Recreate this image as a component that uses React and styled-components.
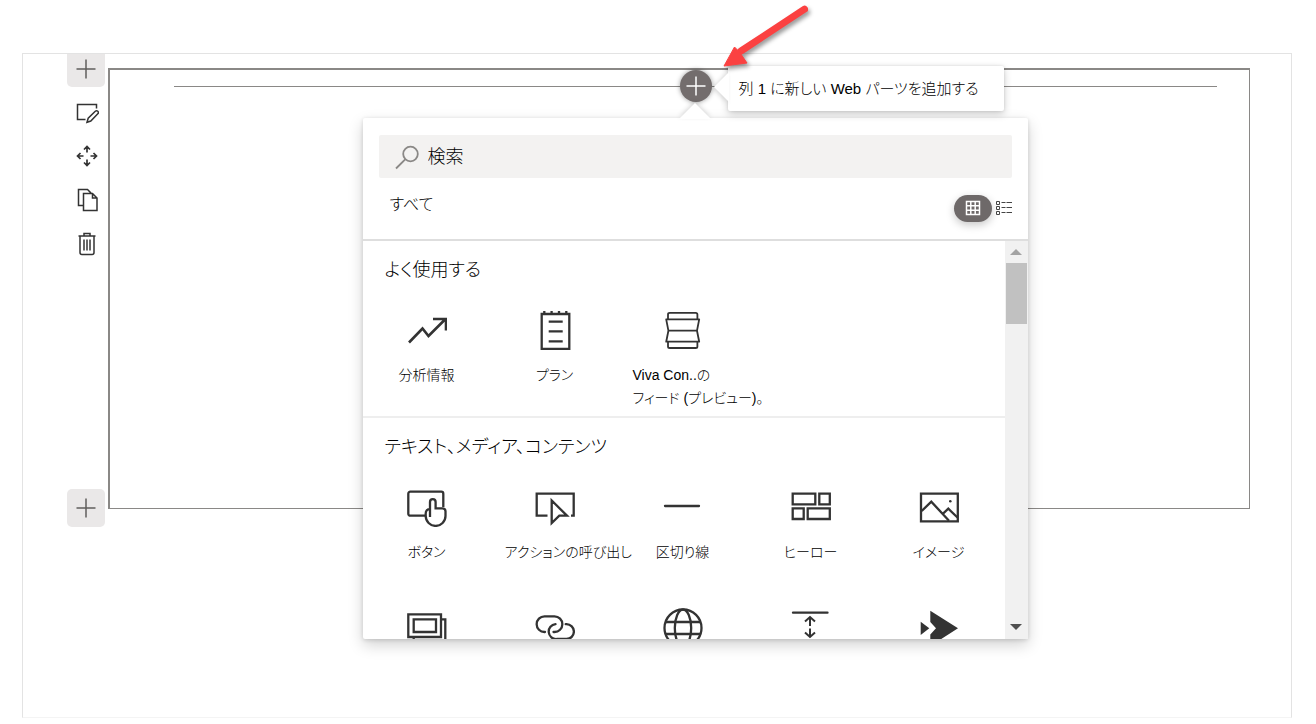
import React from 'react'
import styled, { createGlobalStyle, css } from 'styled-components'

const frequent = [
  { icon: 'trend', label: '分析情報' },
  { icon: 'plan', label: 'プラン' },
  { icon: 'feed', label: 'Viva Con..の', more: 'フィード (プレビュー)。', long: true },
]

const content = [
  { icon: 'button', label: 'ボタン' },
  { icon: 'action', label: 'アクションの呼び出し', long: true },
  { icon: 'divider', label: '区切り線' },
  { icon: 'hero', label: 'ヒーロー' },
  { icon: 'image', label: 'イメージ' },
  { icon: 'gallery', name: 'イメージ ギャラリー' },
  { icon: 'link', name: 'リンク' },
  { icon: 'globe', name: '埋め込み' },
  { icon: 'spacer', name: 'スペーサー' },
  { icon: 'stream', name: 'ストリーム' },
]

const shapes = {
  trend: <path d='M2 32.5L15.5 18.5L21.5 26L38 9.5M26 9H39V20.5' strokeWidth='2.6' />,
  plan: (
    <>
      <path d='M6.7 4H34.3V39H6.7Z' />
      <path d='M9.3 1V4M16.6 1V4M24 1V4M31.3 1V4M13.7 11.7H27.7M13.7 21.3H27.7M13.7 31.3H27.7' />
    </>
  ),
  feed: (
    <path
      strokeWidth='1.8'
      strokeLinejoin='round'
      d='M5 9V4.5Q5 2.8 6.7 2.8H32.7Q34.4 2.8 34.4 4.5V9M3.2 9.3H36.2L34 20.7L36.2 31.7H3.2L5.4 20.7ZM5.4 20.7H34M5 32V36.4Q5 38 6.7 38H32.7Q34.4 38 34.4 36.4V32'
    />
  ),
  button: (
    <>
      <path d='M18 28.7H3.3a2 2 0 0 1-2-2V6.7a2 2 0 0 1 2-2H34.3a2 2 0 0 1 2 2V20' />
      <path d='M23 30V15a2.8 2.8 0 0 1 5.6 0V21.3H35.5a3 3 0 0 1 3 3V29a9.8 9.8 0 0 1-19.8 0V26.5c0-2.5 1.6-4.5 4.3-4.5' />
    </>
  ),
  action: <path d='M12.5 28.7H1.7V6.7H38.7V28.7H36M16.7 13.5V36L24.3 28.7H32Z' />,
  divider: <path d='M2 19H36' strokeLinecap='round' />,
  hero: <path d='M1.7 6.7H24.3V17.3H1.7ZM28.3 6.7H38.8V17.3H28.3ZM1.7 21.3H12.7V32H1.7ZM16.7 21.3H38.8V32H16.7Z' />,
  image: (
    <>
      <path d='M2 6.7H38.8V34.3H2Z' />
      <path d='M2.7 24L12.3 14.7L30 33.7M24.3 26.3L29.3 21.7L38.5 30.5' />
      <circle cx='31.3' cy='14.3' r='1.3' fill='#333' stroke='none' />
    </>
  ),
  gallery: <path d='M1.3 6.3H34V29H1.3ZM6.7 11.3H29V24H6.7ZM34 11.3H38.3V34H6.7V29' />,
  link: (
    <path
      strokeLinecap='round'
      d='M10 24H9.5a7.8 7.8 0 0 1 0-15.7H19.5a7.8 7.8 0 0 1 0 15.7H18.5M20.5 16.2a7.4 7.4 0 0 0 1.3 14.8H31.5a7.4 7.4 0 0 0 0-14.8H30.7'
    />
  ),
  globe: (
    <>
      <circle cx='20' cy='20' r='18.5' />
      <ellipse cx='20' cy='20' rx='8.2' ry='18.5' />
      <path d='M3 14H37M3 26H37' />
    </>
  ),
  spacer: (
    <>
      <path d='M2 4.7H36.5' strokeLinecap='round' />
      <path d='M19 18V9.5M14 13.5L19 9L24 13.5M19 20.5V28.5M14 24.5L19 29L24 24.5M2 35.5H36.5' strokeWidth='2' />
    </>
  ),
  stream: (
    <path
      fill='#333'
      stroke='none'
      d='M11.3 2.7L39 20.3L11.3 38V26.5L17 20.3L11.3 14ZM1.7 13.7L10.3 20.3L1.7 27Z'
    />
  ),
}

function Tile({ icon, label, more, name, long }) {
  return (
    <TileButton type='button' aria-label={name} $long={long}>
      <TileIcon viewBox='0 0 40 40' aria-hidden='true'>{shapes[icon]}</TileIcon>
      {label && (
        <span>
          {label}
          {more && <><br />{more}</>}
        </span>
      )}
    </TileButton>
  )
}

function Plus() {
  return (
    <LineIcon viewBox='0 0 24 24' aria-hidden='true'>
      <path d='M2.5 12H21.5M12 2.5V21.5' />
    </LineIcon>
  )
}

function SectionTools() {
  return (
    <Tools>
      <AddSection type='button' aria-label='セクションの追加' $top><Plus /></AddSection>
      <Tool type='button' aria-label='編集'>
        <LineIcon viewBox='0 0 24 24'>
          <path d='M10.5 19.5H2.5V4.5H21.5V8.5' />
          <path d='M12 22.3L13.2 18.2L20.3 11.3a1.7 1.7 0 0 1 2.5 2.5L15.8 21Z' />
        </LineIcon>
      </Tool>
      <Tool type='button' aria-label='移動'>
        <LineIcon viewBox='0 0 24 24'>
          <path d='M12 8.5V3M9 5.5L12 2.5L15 5.5M12 15.5V21M9 18.5L12 21.5L15 18.5M8.5 12H3M5.5 9L2.5 12L5.5 15M15.5 12H21M18.5 9L21.5 12L18.5 15' strokeWidth='1.7' />
        </LineIcon>
      </Tool>
      <Tool type='button' aria-label='複製'>
        <LineIcon viewBox='0 0 24 24'>
          <path d='M8 17.5H3.5V1.5H12.5L16 5M8.5 5.5H17.5L22 10V22.5H8.5ZM17.5 5.5V10H22' />
        </LineIcon>
      </Tool>
      <Tool type='button' aria-label='削除'>
        <LineIcon viewBox='0 0 24 24'>
          <path d='M3.5 4H20.5M9 4V1.5H15V4M5 4V20.5a2 2 0 0 0 2 2H17a2 2 0 0 0 2-2V4M9 7.5V18.5M12 7.5V18.5M15 7.5V18.5' />
        </LineIcon>
      </Tool>
      <AddSection type='button' aria-label='セクションの追加'><Plus /></AddSection>
    </Tools>
  )
}

function Picker() {
  return (
    <Callout>
      <Header>
        <Search>
          <svg width='26' height='26' viewBox='0 0 26 26' fill='none' stroke='#8a8886' strokeWidth='1.8' aria-hidden='true'>
            <circle cx='15.500' cy='10' r='7.300' />
            <path d='M10.200 15.300L1 24.500' />
          </svg>
          <input type='text' placeholder='検索' aria-label='検索' />
        </Search>
        <Filters>
          <Category type='button'>すべて</Category>
          <View type='button' aria-label='グリッド' $active>
            <svg width='16' height='16' viewBox='0 0 16 16' fill='none' stroke='#fff' strokeWidth='1.5'>
              <path d='M1.5 1.5H14.5V14.5H1.5ZM1.5 5.8H14.5M1.5 10.2H14.5M5.8 1.5V14.5M10.2 1.5V14.5' />
            </svg>
          </View>
          <View type='button' aria-label='リスト'>
            <svg width='16' height='16' viewBox='0 0 16 16' fill='none' stroke='#444' strokeWidth='1'>
              <path d='M.5 1.5H3.5V4.5H.5ZM.5 6.5H3.5V9.5H.5ZM.5 11.5H3.5V14.5H.5Z' />
              <path d='M5.5 2.500H9.500M10.500 2.500H16M5.500 7.500H9.500M10.500 7.500H16M5.500 12.500H9.500M10.500 12.500H16' />
            </svg>
          </View>
        </Filters>
      </Header>
      <Body>
        <List>
          <Group>
            <h2>よく使用する</h2>
            <Tiles>{frequent.map((part) => <Tile key={part.icon} {...part} />)}</Tiles>
          </Group>
          <Group>
            <h2>テキスト、メディア、コンテンツ</h2>
            <Tiles>{content.map((part) => <Tile key={part.icon} {...part} />)}</Tiles>
          </Group>
        </List>
        <ScrollTrack>
          <ScrollArrow />
          <ScrollThumb />
          <ScrollArrow $down />
        </ScrollTrack>
      </Body>
    </Callout>
  )
}

function App() {
  return (
    <Page>
      <GlobalStyle />
      <Canvas>
        <SectionTools />
        <Section>
          <InsertRow>
            <Rule />
            <Insert>
              <InsertButton type='button' aria-label='列 1 に新しい Web パーツを追加する'><Plus /></InsertButton>
              <Picker />
              <Tooltip role='tooltip'>列 1 に新しい Web パーツを追加する</Tooltip>
              <Pointer viewBox='0 0 90 70' aria-hidden='true'>
                <path d='M84.5 7.2L21 49' stroke='#fb4141' strokeWidth='7' strokeLinecap='round' />
                <path d='M4 64L14.5 45L19.5 50L27 61Z' fill='#fb4141' stroke='#fb4141' strokeWidth='1' />
              </Pointer>
            </Insert>
            <Rule />
          </InsertRow>
        </Section>
      </Canvas>
    </Page>
  )
}

export default App

const GlobalStyle = createGlobalStyle`
  * {
    box-sizing: border-box;
  }

  body {
    margin: 0;
    background: #fff;
    color: #000;
    font-family: 'Liberation Sans', 'Noto Sans CJK JP', sans-serif;
    font-weight: 300;
    font-feature-settings: 'palt';
    overflow: hidden;
  }

  button, input {
    font: inherit;
    font-feature-settings: inherit;
    color: inherit;
    border: none;
    background: none;
    padding: 0;
    margin: 0;
  }

  button {
    cursor: pointer;
  }
`

const Page = styled.main`
  min-height: 100vh;
  padding: 53px 24px 6px 22px;
`

const Canvas = styled.div`
  display: flex;
  align-items: flex-start;
  min-height: calc(100vh - 59px);
  padding: 0 41px 0 44px;
  border: 1px solid #e3e3e3;
  border-bottom-color: #f4f4f4;
`

const Tools = styled.div`
  display: flex;
  flex-direction: column;
  align-items: center;
  width: 38px;
  min-height: 473px;
  margin-right: 3px;
`

const AddSection = styled.button`
  display: flex;
  align-items: center;
  justify-content: center;
  width: 38px;
  height: 38px;
  margin-top: auto;
  border-radius: 5px;
  background: #eae8e8;

  ${({ $top }) => $top && css`
    height: 33px;
    margin: 0 0 3px;
    padding-bottom: 4px;
    border-radius: 0 0 5px 5px;
  `}
`

const Tool = styled.button`
  display: flex;
  align-items: center;
  justify-content: center;
  width: 38px;
  height: 44px;
  padding-left: 2px;

  svg {
    stroke: #333;
  }
`

const LineIcon = styled.svg`
  width: 24px;
  height: 24px;
  fill: none;
  stroke: #605e5c;
  stroke-width: 1.5;
`

const Section = styled.section`
  flex: 1;
  min-height: 441px;
  margin-top: 14px;
  padding: 0 32px 0 64px;
  border: 1px solid #8a8886;
  border-width: 2px 1px 1px 2px;
`

const InsertRow = styled.div`
  display: flex;
  align-items: center;
`

const Rule = styled.div`
  flex: 1;
  height: 1px;
  background: #8a8886;
`

const Insert = styled.div`
  position: relative;
`

const InsertButton = styled.button`
  display: flex;
  align-items: center;
  justify-content: center;
  width: 32px;
  height: 32px;
  border-radius: 50%;
  background: #736d6d;
  box-shadow: 0 0 5px rgba(0, 0, 0, .4);

  svg {
    stroke: #fff;
  }
`

const Callout = styled.div`
  position: absolute;
  top: 48px;
  left: 50%;
  width: 665px;
  margin-left: -333px;
  border-radius: 2px;
  background: #fff;
  box-shadow: 0 6px 15px rgba(0, 0, 0, .18), 0 1px 4px rgba(0, 0, 0, .14);

  &::before {
    content: '';
    position: absolute;
    top: -15px;
    left: 316px;
    border: 16px solid transparent;
    border-top: none;
    border-bottom: 16px solid #fff;
    filter: drop-shadow(0 -2px 2px rgba(0, 0, 0, .14));
  }
`

const Header = styled.div`
  display: flex;
  flex-direction: column;
  height: 123px;
  padding: 17px 16px 0;
  border-bottom: 2px solid #dedede;
`

const Search = styled.div`
  display: flex;
  align-items: center;
  gap: 7px;
  height: 43px;
  padding: 0 16px;
  border-radius: 2px;
  background: #f3f2f1;

  input {
    flex: 1;
    min-width: 0;
    height: 100%;
    padding-top: 2px;
    font-size: 18px;
    outline: none;
  }

  input::placeholder {
    color: #000;
    opacity: 1;
  }
`

const Filters = styled.div`
  display: flex;
  align-items: center;
  gap: 4px;
  height: 60px;
`

const Category = styled.button`
  margin: 0 auto 6px 11px;
  font-size: 16px;
  line-height: 24px;
`

const View = styled.button`
  display: flex;
  align-items: center;
  justify-content: center;
  width: ${({ $active }) => ($active ? '38px' : '16px')};
  height: 27px;

  ${({ $active }) => $active && css`
    border-radius: 14px;
    background: #6e6969;
    box-shadow: 0 3px 8px rgba(0, 0, 0, .22);
  `}
`

const Body = styled.div`
  display: flex;
  height: 398px;
`

const List = styled.div`
  flex: 1;
  overflow: hidden;
`

const Group = styled.section`
  padding-top: 17px;

  & + & {
    border-top: 2px solid #eee;
  }

  h2 {
    margin: 0 0 28px 22px;
    font-size: 18px;
    line-height: 24px;
    font-weight: inherit;
  }
`

const Tiles = styled.div`
  display: grid;
  grid-template-columns: repeat(5, 128px);
  row-gap: 44px;
  margin-bottom: 6px;
`

const TileButton = styled.button`
  display: flex;
  flex-direction: column;
  align-items: center;
  gap: 14px;
  font-size: 14px;
  line-height: 23px;
  white-space: nowrap;

  ${({ $long }) => $long && css`
    text-align: left;

    span {
      align-self: flex-start;
      padding-left: 14px;
    }
  `}
`

const TileIcon = styled.svg`
  width: 40px;
  height: 40px;
  fill: none;
  stroke: #333;
  stroke-width: 2.3;
`

const ScrollTrack = styled.div`
  display: flex;
  flex-direction: column;
  align-items: center;
  width: 23px;
  padding: 8px 0 9px;
  background: #f1f1f1;
`

const ScrollArrow = styled.div`
  border: 6px solid transparent;

  ${({ $down }) => ($down ? css`
    margin-top: auto;
    border-top-color: #505050;
    border-bottom: none;
  ` : css`
    border-top: none;
    border-bottom-color: #a3a3a3;
  `)}
`

const ScrollThumb = styled.div`
  width: 21px;
  height: 61px;
  margin-top: 8px;
  background: #c1c1c1;
`

const Tooltip = styled.div`
  position: absolute;
  top: -4px;
  left: 48px;
  padding: 1px 25px 0 11px;
  border-radius: 2px;
  background: #fff;
  box-shadow: 0 3px 8px rgba(0, 0, 0, .2), 0 0 3px rgba(0, 0, 0, .12);
  font-size: 15px;
  line-height: 44px;
  white-space: nowrap;

  &::before {
    content: '';
    position: absolute;
    top: 6px;
    left: -14px;
    border: 15px solid transparent;
    border-left: none;
    border-right: 15px solid #fff;
    filter: drop-shadow(-2px 1px 2px rgba(0, 0, 0, .14));
  }
`

const Pointer = styled.svg`
  position: absolute;
  top: -68px;
  left: 40px;
  width: 90px;
  height: 70px;
  fill: none;
  filter: drop-shadow(2px 3px 2px rgba(0, 0, 0, .4));
  pointer-events: none;
`
